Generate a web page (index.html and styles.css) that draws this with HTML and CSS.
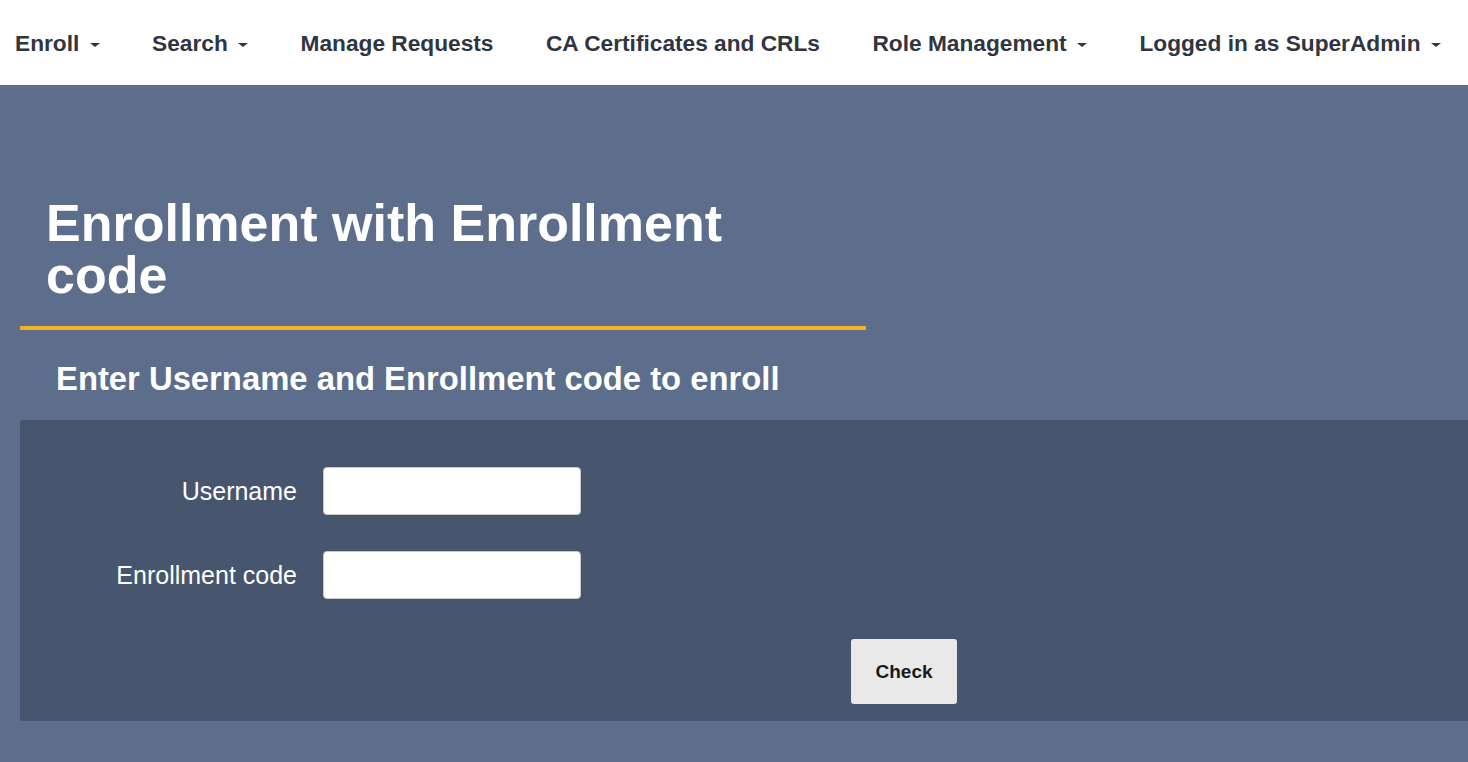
FILE: index.html
```html
<!DOCTYPE html>
<html lang="en">
<head>
  <meta charset="UTF-8">
  <title>Enrollment with Enrollment code</title>
  <link rel="stylesheet" href="styles.css">
</head>
<body>
  <!-- Top navigation -->
  <nav class="navbar">
    <a class="nav-item">Enroll <span class="caret"></span></a>
    <a class="nav-item">Search <span class="caret"></span></a>
    <a class="nav-item">Manage Requests</a>
    <a class="nav-item">CA Certificates and CRLs</a>
    <a class="nav-item">Role Management <span class="caret"></span></a>
    <a class="nav-item">Logged in as SuperAdmin <span class="caret"></span></a>
  </nav>

  <div class="page">
    <div class="title-block">
      <h1 class="heading1">Enrollment with Enrollment code</h1>
    </div>
    <h2 class="heading2">Enter Username and Enrollment code to enroll</h2>

    <!-- Form panel -->
    <div class="panel">
      <div class="form-row">
        <label class="form-label" for="username">Username</label>
        <input class="form-input" id="username" type="text">
      </div>
      <div class="form-row">
        <label class="form-label" for="code">Enrollment code</label>
        <input class="form-input" id="code" type="text">
      </div>
      <div class="form-actions">
        <button class="btn">Check</button>
      </div>
    </div>
  </div>
</body>
</html>
```

FILE: styles.css
```css
/* Basic styles */
body {
    margin: 0;
    font-family: "Liberation Sans", Arial, sans-serif;
    background: #5c6e8b;
    overflow-x: hidden;
}

/* Navbar */
.navbar {
    display: flex;
    align-items: center;
    height: 85px;
    box-sizing: border-box;
    padding: 1px 0 0 15px;
    background: #fff;
}
.nav-item {
    font-size: 22.7px;
    font-weight: bold;
    color: #2f3541;
    margin-right: 52.5px;
    white-space: nowrap;
    cursor: pointer;
}
.caret {
    display: inline-block;
    width: 0;
    height: 0;
    margin-left: 4px;
    vertical-align: middle;
    border-top: 4px solid #2f3541;
    border-left: 5px solid transparent;
    border-right: 5px solid transparent;
}

/* Page */
.page {
    padding: 112px 0 40px 20px;
}
.title-block {
    width: 846px;
    border-bottom: 4px solid #f4b120;
    padding: 0 0 25px 26px;
    box-sizing: border-box;
}
.heading1 {
    margin: 0;
    width: 760px;
    font-size: 52px;
    line-height: 52px;
    color: #fff;
}
.heading2 {
    margin: 30px 0 22px 36px;
    font-size: 32.8px;
    color: #fff;
}

/* Form panel */
.panel {
    background: #47566e;
    border-radius: 3px 0 0 3px;
    padding: 47px 0 17px;
}
.form-row {
    display: flex;
    align-items: center;
    margin-bottom: 36px;
}
.form-label {
    width: 277px;
    text-align: right;
    padding-right: 26px;
    font-size: 25px;
    color: #fff;
}
.form-input {
    width: 258px;
    height: 48px;
    box-sizing: border-box;
    border: 1px solid #c8c8c8;
    border-radius: 4px;
    background: #fff;
}
.form-actions {
    padding: 4px 0 0 831px;
}
.btn {
    width: 106px;
    height: 65px;
    background: #e9e9e9;
    border: none;
    border-radius: 3px;
    font-family: "Liberation Sans", Arial, sans-serif;
    font-size: 19px;
    font-weight: bold;
    color: #1a1a1a;
}
```
